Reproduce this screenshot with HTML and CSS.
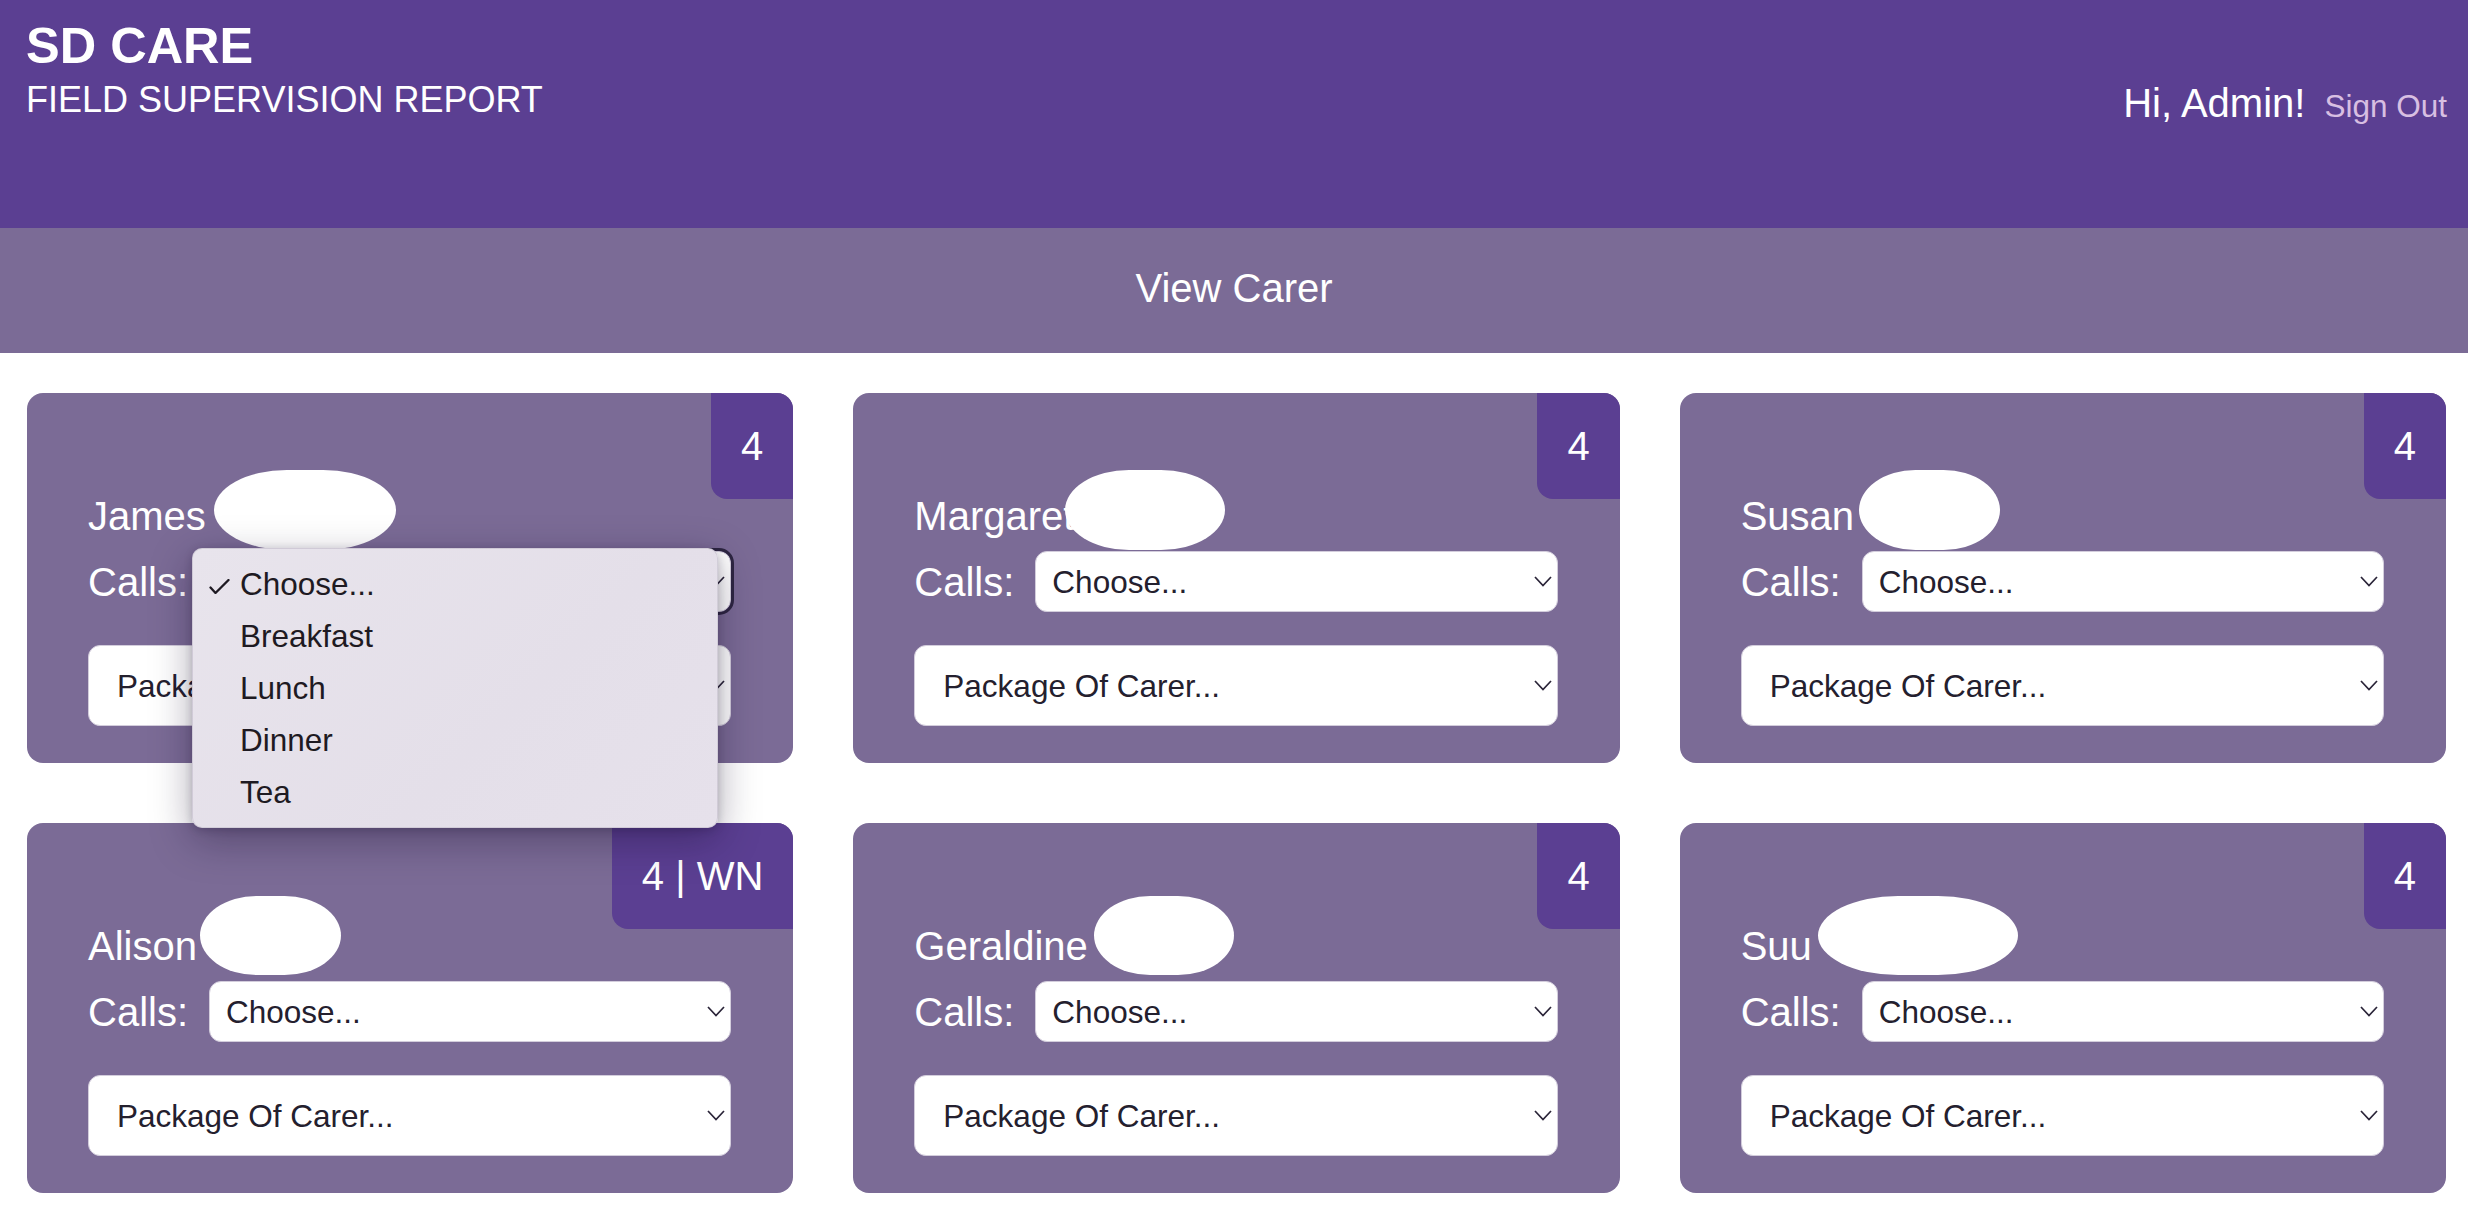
FILE: index.html
```html
<!DOCTYPE html>
<html lang="en">
<head>
<meta charset="utf-8">
<title>SD CARE - View Carer</title>
<link rel="stylesheet" href="styles.css">
</head>
<body>
<header class="topbar">
  <div class="brand">
    <h1 class="brand-title">SD CARE</h1>
    <div class="brand-sub">FIELD SUPERVISION REPORT</div>
  </div>
  <div class="user">
    <span class="greet">Hi, Admin!</span>
    <a class="signout" href="#">Sign Out</a>
  </div>
</header>

<div class="subbar">View Carer</div>

<main class="grid">
  <section class="card">
    <div class="badge">4</div>
    <div class="name">James</div>
    <span class="blob blob-james"></span>
    <div class="calls-row">
      <label class="calls-label">Calls:</label>
      <div class="select-wrap">
        <select class="sel sel-calls is-focused"><option>Choose...</option><option>Breakfast</option><option>Lunch</option><option>Dinner</option><option>Tea</option></select>
        <svg class="chev" width="18" height="11" viewBox="0 0 18 11"><polyline points="1,1 9,9.5 17,1" fill="none" stroke="#2a2438" stroke-width="1.7"/></svg>
      </div>
    </div>
    <div class="select-wrap pkg-wrap">
      <select class="sel sel-pkg"><option>Package Of Carer...</option></select>
      <svg class="chev" width="18" height="11" viewBox="0 0 18 11"><polyline points="1,1 9,9.5 17,1" fill="none" stroke="#2a2438" stroke-width="1.7"/></svg>
    </div>
    <div class="popup">
      <div class="popup-item"><svg class="check" width="21" height="15" viewBox="0 0 21 15"><path d="M1.5 8.5 L6.5 14 L19.5 1" fill="none" stroke="#1e1a22" stroke-width="2.3" stroke-linecap="round" stroke-linejoin="round"/></svg>Choose...</div>
      <div class="popup-item">Breakfast</div>
      <div class="popup-item">Lunch</div>
      <div class="popup-item">Dinner</div>
      <div class="popup-item">Tea</div>
    </div>
  </section>

  <section class="card">
    <div class="badge">4</div>
    <div class="name">Margaret</div>
    <span class="blob blob-margaret"></span>
    <div class="calls-row">
      <label class="calls-label">Calls:</label>
      <div class="select-wrap">
        <select class="sel sel-calls"><option>Choose...</option><option>Breakfast</option><option>Lunch</option><option>Dinner</option><option>Tea</option></select>
        <svg class="chev" width="18" height="11" viewBox="0 0 18 11"><polyline points="1,1 9,9.5 17,1" fill="none" stroke="#2a2438" stroke-width="1.7"/></svg>
      </div>
    </div>
    <div class="select-wrap pkg-wrap">
      <select class="sel sel-pkg"><option>Package Of Carer...</option></select>
      <svg class="chev" width="18" height="11" viewBox="0 0 18 11"><polyline points="1,1 9,9.5 17,1" fill="none" stroke="#2a2438" stroke-width="1.7"/></svg>
    </div>
  </section>

  <section class="card">
    <div class="badge">4</div>
    <div class="name">Susan</div>
    <span class="blob blob-susan"></span>
    <div class="calls-row">
      <label class="calls-label">Calls:</label>
      <div class="select-wrap">
        <select class="sel sel-calls"><option>Choose...</option><option>Breakfast</option><option>Lunch</option><option>Dinner</option><option>Tea</option></select>
        <svg class="chev" width="18" height="11" viewBox="0 0 18 11"><polyline points="1,1 9,9.5 17,1" fill="none" stroke="#2a2438" stroke-width="1.7"/></svg>
      </div>
    </div>
    <div class="select-wrap pkg-wrap">
      <select class="sel sel-pkg"><option>Package Of Carer...</option></select>
      <svg class="chev" width="18" height="11" viewBox="0 0 18 11"><polyline points="1,1 9,9.5 17,1" fill="none" stroke="#2a2438" stroke-width="1.7"/></svg>
    </div>
  </section>

  <section class="card card-row2">
    <div class="badge">4 | WN</div>
    <div class="name">Alison</div>
    <span class="blob blob-alison"></span>
    <div class="calls-row">
      <label class="calls-label">Calls:</label>
      <div class="select-wrap">
        <select class="sel sel-calls"><option>Choose...</option><option>Breakfast</option><option>Lunch</option><option>Dinner</option><option>Tea</option></select>
        <svg class="chev" width="18" height="11" viewBox="0 0 18 11"><polyline points="1,1 9,9.5 17,1" fill="none" stroke="#2a2438" stroke-width="1.7"/></svg>
      </div>
    </div>
    <div class="select-wrap pkg-wrap">
      <select class="sel sel-pkg"><option>Package Of Carer...</option></select>
      <svg class="chev" width="18" height="11" viewBox="0 0 18 11"><polyline points="1,1 9,9.5 17,1" fill="none" stroke="#2a2438" stroke-width="1.7"/></svg>
    </div>
  </section>

  <section class="card card-row2">
    <div class="badge">4</div>
    <div class="name">Geraldine</div>
    <span class="blob blob-geraldine"></span>
    <div class="calls-row">
      <label class="calls-label">Calls:</label>
      <div class="select-wrap">
        <select class="sel sel-calls"><option>Choose...</option><option>Breakfast</option><option>Lunch</option><option>Dinner</option><option>Tea</option></select>
        <svg class="chev" width="18" height="11" viewBox="0 0 18 11"><polyline points="1,1 9,9.5 17,1" fill="none" stroke="#2a2438" stroke-width="1.7"/></svg>
      </div>
    </div>
    <div class="select-wrap pkg-wrap">
      <select class="sel sel-pkg"><option>Package Of Carer...</option></select>
      <svg class="chev" width="18" height="11" viewBox="0 0 18 11"><polyline points="1,1 9,9.5 17,1" fill="none" stroke="#2a2438" stroke-width="1.7"/></svg>
    </div>
  </section>

  <section class="card card-row2">
    <div class="badge">4</div>
    <div class="name">Suu</div>
    <span class="blob blob-suu"></span>
    <div class="calls-row">
      <label class="calls-label">Calls:</label>
      <div class="select-wrap">
        <select class="sel sel-calls"><option>Choose...</option><option>Breakfast</option><option>Lunch</option><option>Dinner</option><option>Tea</option></select>
        <svg class="chev" width="18" height="11" viewBox="0 0 18 11"><polyline points="1,1 9,9.5 17,1" fill="none" stroke="#2a2438" stroke-width="1.7"/></svg>
      </div>
    </div>
    <div class="select-wrap pkg-wrap">
      <select class="sel sel-pkg"><option>Package Of Carer...</option></select>
      <svg class="chev" width="18" height="11" viewBox="0 0 18 11"><polyline points="1,1 9,9.5 17,1" fill="none" stroke="#2a2438" stroke-width="1.7"/></svg>
    </div>
  </section>
</main>
</body>
</html>
```

FILE: styles.css
```css
* { box-sizing: border-box; }

html, body {
  margin: 0;
  padding: 0;
  background: #ffffff;
  font-family: "Liberation Sans", Arial, Helvetica, sans-serif;
}

/* ---------- top bar ---------- */
.topbar {
  height: 228px;
  background: #5b3f92;
  color: #ffffff;
  display: flex;
  justify-content: space-between;
  align-items: flex-start;
  padding: 17px 21px 0 26px;
}

.brand-title {
  margin: 0;
  font-size: 50.5px;
  font-weight: 700;
  line-height: 57px;
}

.brand-sub {
  margin-top: 5px;
  font-size: 36px;
  line-height: 41px;
}

.user {
  margin-top: 63px;
  display: flex;
  align-items: baseline;
  gap: 19px;
}

.greet {
  font-size: 40px;
  line-height: 46px;
}

.signout {
  font-size: 31.5px;
  color: #d8bfe2;
  text-decoration: none;
}

/* ---------- sub bar ---------- */
.subbar {
  height: 125px;
  background: #7b6b96;
  color: #ffffff;
  font-size: 40px;
  display: flex;
  align-items: center;
  justify-content: center;
  padding-bottom: 4px;
}

/* ---------- grid of cards ---------- */
.grid {
  display: grid;
  grid-template-columns: repeat(3, 1fr);
  column-gap: 60px;
  row-gap: 60px;
  padding: 40px 22px 40px 27px;
}

.card {
  position: relative;
  height: 370px;
  background: #7b6b96;
  border-radius: 16px;
  padding: 100px 62px 0 61px;
  color: #ffffff;
}

.badge {
  position: absolute;
  top: 0;
  right: 0;
  height: 106px;
  padding: 0 30px;
  background: #5b3f92;
  border-radius: 0 16px 0 16px;
  font-size: 40px;
  line-height: 106px;
  white-space: nowrap;
}

.name {
  font-size: 40px;
  line-height: 46px;
  white-space: nowrap;
}

/* redaction blobs painted over the surnames */
.blob {
  position: absolute;
  top: 77px;
  height: 80px;
  background: #ffffff;
  border-radius: 40% / 50%;
  filter: blur(0.7px);
}
.card-row2 .blob { top: 73px; height: 79px; }
.blob-james { left: 187px; width: 182px; }
.blob-margaret { left: 212px; width: 160px; }
.blob-susan { left: 179px; width: 141px; }
.blob-alison { left: 173px; width: 141px; }
.blob-geraldine { left: 241px; width: 140px; }
.blob-suu { left: 138px; width: 200px; }

.calls-row {
  margin-top: 12px;
  display: flex;
  align-items: center;
  height: 61px;
}

.calls-label {
  font-size: 40px;
  line-height: 46px;
  margin-right: 21px;
  white-space: nowrap;
}

.select-wrap {
  position: relative;
  flex: 1;
}

.sel {
  appearance: none;
  -webkit-appearance: none;
  width: 100%;
  background: #ffffff;
  border: 1px solid #d3cddc;
  border-radius: 12px;
  color: #24202e;
  font-family: "Liberation Sans", Arial, Helvetica, sans-serif;
  font-size: 31.5px;
  margin: 0;
  outline: none;
}

.sel-calls {
  height: 61px;
  padding: 0 40px 0 16px;
}

.sel-calls.is-focused {
  outline: 3px solid #2e2642;
  outline-offset: 0;
}

.pkg-wrap {
  margin-top: 33px;
}

.sel-pkg {
  height: 81px;
  padding: 0 40px 0 28px;
}

.chev {
  position: absolute;
  right: 6px;
  top: 50%;
  margin-top: -6px;
  pointer-events: none;
}

/* ---------- open native dropdown ---------- */
.popup {
  position: absolute;
  z-index: 10;
  left: 165px;
  top: 155px;
  width: 526px;
  height: 280px;
  padding: 9px 0 12px;
  border-radius: 10px;
  background: linear-gradient(135deg, #e8e4ec 0%, #e4dfe9 60%, #e6e1eb 100%);
  border: 1px solid rgba(60, 50, 80, 0.12);
  box-shadow: 0 12px 40px rgba(20, 10, 40, 0.35), 0 2px 8px rgba(20, 10, 40, 0.2);
  color: #1e1a22;
}

.popup-item {
  position: relative;
  height: 52px;
  line-height: 52px;
  padding-left: 47px;
  font-size: 31.5px;
  white-space: nowrap;
}

.check {
  position: absolute;
  left: 16px;
  top: 21px;
}
```
